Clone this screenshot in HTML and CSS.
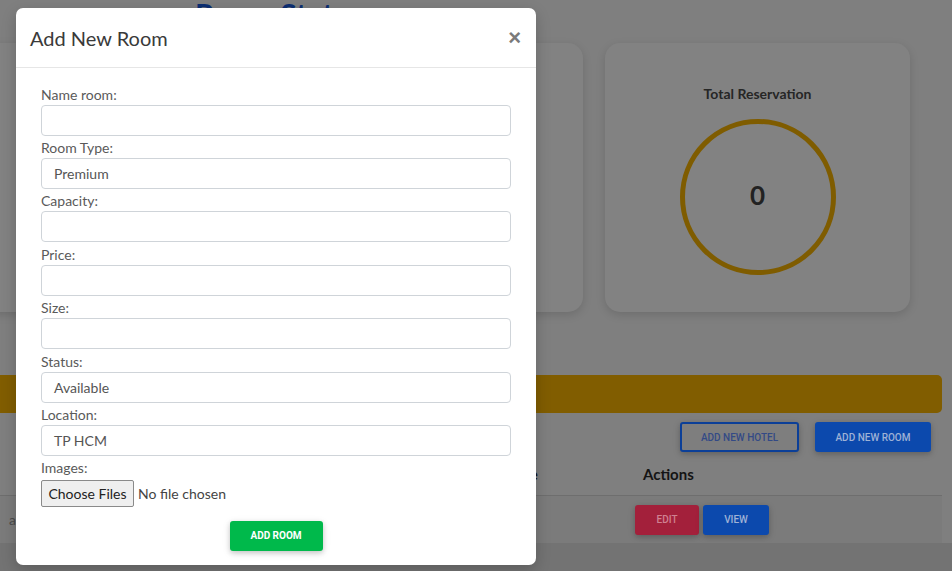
FILE: index.html
```html
<!DOCTYPE html>
<html lang="en">
<head>
<meta charset="utf-8">
<title>Add New Room</title>
<link rel="stylesheet" href="styles.css">
</head>
<body>
<div class="page">
  <h1 class="page-title">Room Status</h1>
  <div class="stats">
    <div class="card card-left"></div>
    <div class="card card-right">
      <h3 class="card-title">Total Reservation</h3>
      <div class="ring"><span class="ring-value">0</span></div>
    </div>
  </div>
  <div class="table-wrap">
    <div class="band"></div>
    <div class="toolbar">
      <button class="btn btn-outline">ADD NEW HOTEL</button>
      <button class="btn btn-blue">ADD NEW ROOM</button>
    </div>
    <div class="row head">
      <div class="cell"></div>
      <div class="cell price-head">Price</div>
      <div class="cell">Actions</div>
    </div>
    <div class="row data">
      <div class="cell first">a</div>
      <div class="cell"></div>
      <div class="cell actions">
        <button class="btn btn-red">EDIT</button>
        <button class="btn btn-blue btn-view">VIEW</button>
      </div>
    </div>
  </div>
</div>

<div class="modal">
  <div class="modal-header">
    <h2 class="modal-title">Add New Room</h2>
    <span class="close">&times;</span>
  </div>
  <div class="modal-body">
    <div class="group"><label class="lbl">Name room:</label><div class="field"></div></div>
    <div class="group"><label class="lbl">Room Type:</label><div class="field">Premium</div></div>
    <div class="group"><label class="lbl">Capacity:</label><div class="field"></div></div>
    <div class="group"><label class="lbl">Price:</label><div class="field"></div></div>
    <div class="group"><label class="lbl">Size:</label><div class="field"></div></div>
    <div class="group"><label class="lbl">Status:</label><div class="field">Available</div></div>
    <div class="group"><label class="lbl">Location:</label><div class="field">TP HCM</div></div>
    <div class="group last"><label class="lbl">Images:</label>
      <div class="file-row"><span class="file-btn">Choose Files</span><span class="file-name">No file chosen</span></div>
    </div>
    <div class="submit-row"><button class="btn btn-green">ADD ROOM</button></div>
  </div>
</div>
</body>
</html>
```

FILE: styles.css
```css
html, body {
  margin: 0;
  padding: 0;
}
body {
  width: 952px;
  height: 571px;
  overflow: hidden;
  background: #737373;
  font-family: Lato, "Liberation Sans", sans-serif;
  position: relative;
}
.page {
  background: #7f7f7f;
  overflow: hidden;
}
.page-title {
  margin: -2px 0 0 0;
  padding-left: 195px;
  font-size: 30px;
  line-height: 32px;
  font-weight: 700;
  color: #0c2e72;
}
.stats {
  display: flex;
  gap: 22px;
  margin: 13px 0 0 -20px;
  width: 930px;
}
.card {
  height: 269px;
  background: #828282;
  border-radius: 15px;
  box-shadow: 0 3px 10px rgba(0, 0, 0, 0.14);
}
.card-left {
  flex: 1;
}
.card-right {
  width: 305px;
  display: flex;
  flex-direction: column;
  align-items: center;
  padding-top: 42px;
  box-sizing: border-box;
}
.card-title {
  margin: 0;
  font-size: 14px;
  line-height: 18px;
  font-weight: 700;
  color: #262626;
}
.ring {
  margin-top: 16px;
  width: 156px;
  height: 156px;
  box-sizing: border-box;
  border: 5px solid #7f5c00;
  border-radius: 50%;
  display: flex;
  align-items: center;
  justify-content: center;
}
.ring-value {
  font-size: 26px;
  font-weight: 700;
  color: #222;
  margin-top: -4px;
}
.table-wrap {
  width: 942px;
  margin-top: 63px;
}
.band {
  height: 38px;
  background: #815d00;
  border-radius: 0 5px 5px 0;
}
.toolbar {
  display: flex;
  justify-content: flex-end;
  gap: 16px;
  padding: 9px 11px 0 0;
}
.btn {
  border: none;
  font-family: Roboto, "Liberation Sans", sans-serif;
  font-size: 10px;
  font-weight: 500;
  height: 30px;
  border-radius: 3px;
  cursor: pointer;
  box-shadow: 0 2px 5px rgba(0, 0, 0, 0.16), 0 2px 8px rgba(0, 0, 0, 0.1);
  padding: 0;
}
.btn-outline {
  width: 119px;
  background: #7e7e7e;
  border: 2px solid #0b3f98;
  color: #334a86;
}
.btn-blue {
  width: 116px;
  background: #0c49ad;
  color: #9fb2d6;
}
.row {
  display: grid;
  grid-template-columns: 494px 133px 1fr;
  align-items: center;
}
.row.head {
  height: 43px;
  font-size: 15px;
  font-weight: 700;
  color: #141414;
}
.row.head .cell {
  padding-left: 8px;
}
.row.head .cell.price-head {
  padding-left: 10px;
}
.row.head .cell:nth-child(3) {
  padding-left: 16px;
}
.row.data {
  height: 48px;
  box-sizing: border-box;
  border-top: 1px solid #6e6e6e;
  background: #7b7b7b;
  font-size: 14px;
  color: #4a4a4a;
}
.row.data .cell.first {
  padding-left: 9px;
}
.actions {
  display: flex;
  gap: 4px;
  padding-left: 8px;
}
.btn-red {
  width: 64px;
  background: #a3203b;
  color: #cf8191;
}
.btn-view {
  width: 66px;
}

/* Modal */
.modal {
  position: absolute;
  left: 16px;
  top: 8px;
  width: 520px;
  height: 557px;
  background: #fff;
  border-radius: 7px;
  box-shadow: 0 5px 15px rgba(0, 0, 0, 0.2);
  overflow: hidden;
  color: #555;
}
.modal-header {
  height: 60px;
  box-sizing: border-box;
  border-bottom: 1px solid #e6e6e6;
  display: flex;
  align-items: center;
  justify-content: space-between;
  padding: 0 15px 0 14px;
}
.modal-title {
  margin: 0;
  font-size: 20px;
  font-weight: 400;
  color: #3a3a3a;
  line-height: 28px;
}
.close {
  font-family: "Liberation Sans", sans-serif;
  font-size: 22px;
  font-weight: 700;
  color: #7a7a7a;
  line-height: 1;
}
.modal-body {
  padding: 15.5px 25px 14px 25px;
}
.group {
  margin-bottom: 1.43px;
}
.group.last {
  margin-bottom: 0;
}
.lbl {
  display: block;
  font-size: 14px;
  line-height: 21px;
  color: #5a5a5a;
}
.field {
  height: 31px;
  box-sizing: border-box;
  border: 1px solid #cfd4d9;
  border-radius: 4px;
  padding: 0 12px;
  font-size: 14px;
  line-height: 29px;
  color: #555;
}
.file-row {
  display: flex;
  align-items: center;
  margin-top: 1.5px;
  height: 27px;
}
.file-btn {
  height: 27px;
  box-sizing: border-box;
  width: 93px;
  display: flex;
  align-items: center;
  justify-content: center;
  background: #efefef;
  border: 1px solid #8a8a8a;
  border-radius: 2px;
  font-size: 14px;
  color: #222;
}
.file-name {
  margin-left: 4px;
  font-size: 14px;
  color: #444;
}
.submit-row {
  display: flex;
  justify-content: center;
  margin-top: 14px;
}
.btn-green {
  width: 93px;
  background: #00b94b;
  color: #fff;
  font-weight: 700;
  font-size: 10px;
}
```
